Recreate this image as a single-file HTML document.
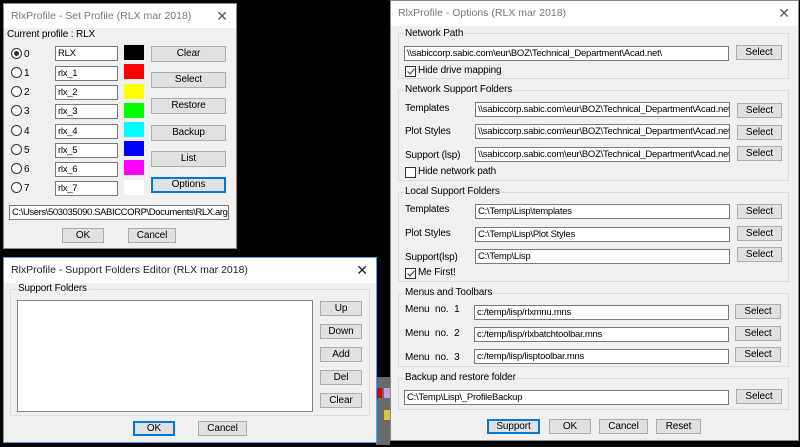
<!DOCTYPE html>
<html><head><style>
*{box-sizing:border-box;margin:0;padding:0}
body{width:800px;height:447px;background:#000;position:relative;overflow:hidden;font-family:"Liberation Sans",sans-serif;font-size:10px;color:#000}
.a{position:absolute}
.win{position:absolute;background:#f0f0f0;border:1px solid #8a8a8a}
.tb{position:absolute;background:#fff;border:1px solid #7a7a7a;font-size:9.5px;letter-spacing:-0.25px;line-height:13px;padding-left:2px;white-space:nowrap;overflow:hidden}
.bt{position:absolute;background:#e1e1e1;border:1px solid #adadad;text-align:center;font-size:10px;line-height:13px;letter-spacing:-0.1px}
.bt.d{border:1px solid #0078d7;box-shadow:inset 0 0 0 1px #0078d7}
.grp{position:absolute;border:1px solid #dcdcdc}
.lab{position:absolute;white-space:nowrap;font-size:10px;letter-spacing:-0.15px}
.cb{position:absolute;width:11px;height:11px;border:1px solid #333;background:#fff}
.cb.c::after{content:"";position:absolute;left:3px;top:0px;width:3px;height:6px;border:solid #333;border-width:0 1px 1px 0;transform:rotate(40deg)}
.rd{position:absolute;width:11px;height:11px;border:1px solid #333;border-radius:50%;background:#fff}
.rd.s::after{content:"";position:absolute;left:2px;top:2px;width:5px;height:5px;border-radius:50%;background:#333}
.title{position:absolute;left:0;top:0;right:0;background:#fff;color:#777;font-size:10.5px;padding-left:7px}
.x{position:absolute;right:8px;font-size:14px;color:#555}
</style></head><body>

<div class="a" style="left:376px;top:377px;width:14px;height:68px;background:#6a6a6a"></div>
<div class="a" style="left:377px;top:388px;width:5px;height:10px;background:#d00"></div>
<div class="a" style="left:384px;top:388px;width:6px;height:10px;background:#c8a0d8"></div>
<div class="a" style="left:384px;top:410px;width:6px;height:10px;background:#cc4"></div>

<!-- Set Profile -->
<div class="win" style="left:3px;top:3px;width:234px;height:246px">
<div class="title" style="height:24px;line-height:24px">RlxProfile - Set Profile (RLX mar 2018)<span class="x" style="top:0">✕</span></div>
</div>
<div class="lab" style="left:7px;top:29px">Current profile : RLX</div>
<div class="rd s" style="left:11px;top:48px"></div><div class="lab" style="left:24px;top:49px">0</div>
<div class="rd" style="left:11px;top:67px"></div><div class="lab" style="left:24px;top:68px">1</div>
<div class="rd" style="left:11px;top:86px"></div><div class="lab" style="left:24px;top:87px">2</div>
<div class="rd" style="left:11px;top:105px"></div><div class="lab" style="left:24px;top:106px">3</div>
<div class="rd" style="left:11px;top:125px"></div><div class="lab" style="left:24px;top:126px">4</div>
<div class="rd" style="left:11px;top:144px"></div><div class="lab" style="left:24px;top:145px">5</div>
<div class="rd" style="left:11px;top:163px"></div><div class="lab" style="left:24px;top:164px">6</div>
<div class="rd" style="left:11px;top:182px"></div><div class="lab" style="left:24px;top:183px">7</div>
<div class="tb" style="left:55px;top:46px;width:63px;height:15px">RLX</div>
<div class="tb" style="left:55px;top:66px;width:63px;height:15px">rlx_1</div>
<div class="tb" style="left:55px;top:85px;width:63px;height:15px">rlx_2</div>
<div class="tb" style="left:55px;top:104px;width:63px;height:15px">rlx_3</div>
<div class="tb" style="left:55px;top:124px;width:63px;height:15px">rlx_4</div>
<div class="tb" style="left:55px;top:143px;width:63px;height:15px">rlx_5</div>
<div class="tb" style="left:55px;top:162px;width:63px;height:15px">rlx_6</div>
<div class="tb" style="left:55px;top:181px;width:63px;height:15px">rlx_7</div>
<div class="a" style="left:124px;top:45px;width:20px;height:15px;background:#000"></div>
<div class="a" style="left:124px;top:64px;width:20px;height:15px;background:#f00"></div>
<div class="a" style="left:124px;top:84px;width:20px;height:15px;background:#ff0"></div>
<div class="a" style="left:124px;top:103px;width:20px;height:15px;background:#0f0"></div>
<div class="a" style="left:124px;top:122px;width:20px;height:15px;background:#0ff"></div>
<div class="a" style="left:124px;top:141px;width:20px;height:15px;background:#00f"></div>
<div class="a" style="left:124px;top:160px;width:20px;height:15px;background:#f0f"></div>
<div class="a" style="left:124px;top:180px;width:20px;height:15px;background:#fff"></div>
<div class="bt" style="left:151px;top:46px;width:75px;height:16px">Clear</div>
<div class="bt" style="left:151px;top:72px;width:75px;height:16px">Select</div>
<div class="bt" style="left:151px;top:98px;width:75px;height:16px">Restore</div>
<div class="bt" style="left:151px;top:125px;width:75px;height:16px">Backup</div>
<div class="bt" style="left:151px;top:151px;width:75px;height:16px">List</div>
<div class="bt d" style="left:151px;top:177px;width:75px;height:16px">Options</div>
<div class="tb" style="left:9px;top:205px;width:220px;height:15px;letter-spacing:-0.4px">C:\Users\503035090.SABICCORP\Documents\RLX.arg</div>
<div class="bt" style="left:62px;top:228px;width:42px;height:15px">OK</div>
<div class="bt" style="left:128px;top:228px;width:48px;height:15px">Cancel</div>

<!-- Support Folders Editor -->
<div class="win" style="left:3px;top:257px;width:374px;height:186px;border-color:#5a9bd5">
<div class="title" style="height:25px;line-height:25px;color:#222">RlxProfile - Support Folders Editor (RLX mar 2018)<span class="x" style="top:0;color:#222">✕</span></div>
</div>
<div class="grp" style="left:10px;top:289px;width:360px;height:127px"></div>
<div class="lab" style="left:16px;top:283px;background:#f0f0f0;padding:0 2px">Support Folders</div>
<div class="a" style="left:17px;top:300px;width:296px;height:112px;background:#fff;border:1px solid #828282"></div>
<div class="bt" style="left:320px;top:301px;width:42px;height:15px">Up</div>
<div class="bt" style="left:320px;top:324px;width:42px;height:15px">Down</div>
<div class="bt" style="left:320px;top:347px;width:42px;height:15px">Add</div>
<div class="bt" style="left:320px;top:370px;width:42px;height:15px">Del</div>
<div class="bt" style="left:320px;top:393px;width:42px;height:15px">Clear</div>
<div class="bt d" style="left:133px;top:421px;width:42px;height:15px">OK</div>
<div class="bt" style="left:198px;top:421px;width:49px;height:15px">Cancel</div>

<!-- Options -->
<div class="win" style="left:390px;top:0px;width:409px;height:441px">
<div class="title" style="height:25px;line-height:25px">RlxProfile - Options (RLX mar 2018)<span class="x" style="top:0">✕</span></div>
</div>
<div class="grp" style="left:398px;top:33px;width:391px;height:46px"></div>
<div class="lab" style="left:404px;top:28px;background:#f0f0f0;padding:0 1px">Network Path</div>
<div class="tb" style="left:404px;top:46px;width:325px;height:15px">\\sabiccorp.sabic.com\eur\BOZ\Technical_Department\Acad.net\</div>
<div class="bt" style="left:736px;top:45px;width:46px;height:15px">Select</div>
<div class="cb c" style="left:405px;top:66px"></div><div class="lab" style="left:418px;top:65px">Hide drive mapping</div>

<div class="grp" style="left:398px;top:90px;width:391px;height:91px"></div>
<div class="lab" style="left:404px;top:84px;background:#f0f0f0;padding:0 1px">Network Support Folders</div>
<div class="lab" style="left:405px;top:103px">Templates</div>
<div class="lab" style="left:405px;top:126px">Plot Styles</div>
<div class="lab" style="left:405px;top:150px">Support (lsp)</div>
<div class="tb" style="left:475px;top:102px;width:255px;height:15px">\\sabiccorp.sabic.com\eur\BOZ\Technical_Department\Acad.net\te</div>
<div class="tb" style="left:475px;top:124px;width:255px;height:15px">\\sabiccorp.sabic.com\eur\BOZ\Technical_Department\Acad.net\P</div>
<div class="tb" style="left:475px;top:147px;width:255px;height:15px">\\sabiccorp.sabic.com\eur\BOZ\Technical_Department\Acad.net\L</div>
<div class="bt" style="left:737px;top:103px;width:45px;height:15px">Select</div>
<div class="bt" style="left:737px;top:125px;width:45px;height:15px">Select</div>
<div class="bt" style="left:737px;top:146px;width:45px;height:15px">Select</div>
<div class="cb" style="left:405px;top:167px"></div><div class="lab" style="left:418px;top:166px">Hide network path</div>

<div class="grp" style="left:398px;top:192px;width:391px;height:90px"></div>
<div class="lab" style="left:404px;top:186px;background:#f0f0f0;padding:0 1px">Local Support Folders</div>
<div class="lab" style="left:405px;top:204px">Templates</div>
<div class="lab" style="left:405px;top:228px">Plot Styles</div>
<div class="lab" style="left:405px;top:252px">Support(lsp)</div>
<div class="tb" style="left:475px;top:204px;width:255px;height:15px">C:\Temp\Lisp\templates</div>
<div class="tb" style="left:475px;top:227px;width:255px;height:15px">C:\Temp\Lisp\Plot Styles</div>
<div class="tb" style="left:475px;top:249px;width:255px;height:15px">C:\Temp\Lisp</div>
<div class="bt" style="left:737px;top:204px;width:45px;height:15px">Select</div>
<div class="bt" style="left:737px;top:226px;width:45px;height:15px">Select</div>
<div class="bt" style="left:737px;top:247px;width:45px;height:15px">Select</div>
<div class="cb c" style="left:405px;top:268px"></div><div class="lab" style="left:418px;top:267px">Me First!</div>

<div class="grp" style="left:398px;top:293px;width:391px;height:74px"></div>
<div class="lab" style="left:404px;top:287px;background:#f0f0f0;padding:0 1px">Menus and Toolbars</div>
<div class="lab" style="left:405px;top:304px;word-spacing:3px">Menu no. 1</div>
<div class="lab" style="left:405px;top:328px;word-spacing:3px">Menu no. 2</div>
<div class="lab" style="left:405px;top:352px;word-spacing:3px">Menu no. 3</div>
<div class="tb" style="left:474px;top:305px;width:255px;height:15px">c:/temp/lisp/rlxmnu.mns</div>
<div class="tb" style="left:474px;top:327px;width:255px;height:15px">c:/temp/lisp/rlxbatchtoolbar.mns</div>
<div class="tb" style="left:474px;top:349px;width:255px;height:15px">c:/temp/lisp/lisptoolbar.mns</div>
<div class="bt" style="left:735px;top:304px;width:46px;height:15px">Select</div>
<div class="bt" style="left:735px;top:326px;width:46px;height:15px">Select</div>
<div class="bt" style="left:735px;top:347px;width:46px;height:15px">Select</div>

<div class="grp" style="left:398px;top:378px;width:391px;height:32px"></div>
<div class="lab" style="left:404px;top:372px;background:#f0f0f0;padding:0 1px">Backup and restore folder</div>
<div class="tb" style="left:404px;top:390px;width:325px;height:15px">C:\Temp\Lisp\_ProfileBackup</div>
<div class="bt" style="left:736px;top:389px;width:46px;height:15px">Select</div>

<div class="bt d" style="left:487px;top:419px;width:53px;height:15px">Support</div>
<div class="bt" style="left:549px;top:419px;width:42px;height:15px">OK</div>
<div class="bt" style="left:599px;top:419px;width:49px;height:15px">Cancel</div>
<div class="bt" style="left:656px;top:419px;width:45px;height:15px">Reset</div>
</body></html>
